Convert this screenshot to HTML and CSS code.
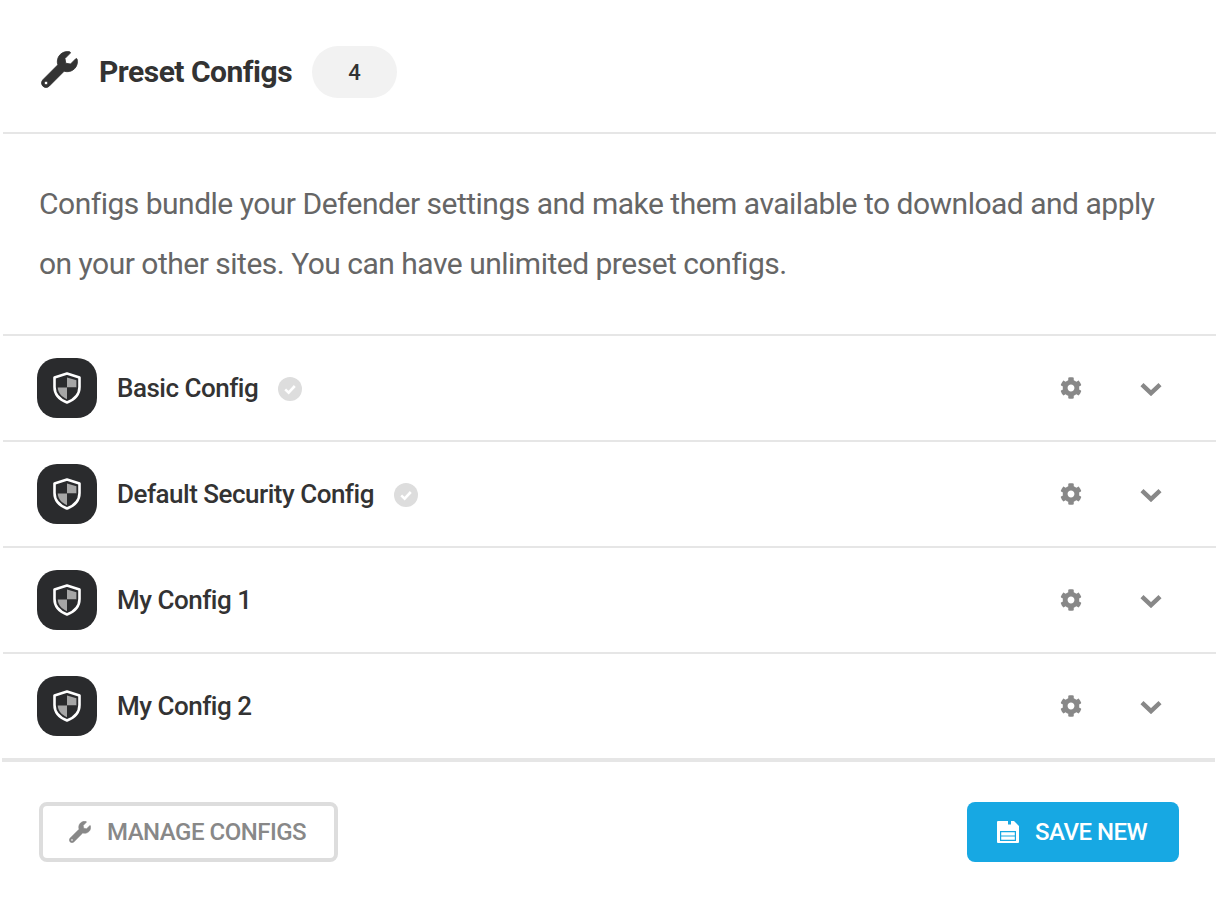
FILE: index.html
```html
<!DOCTYPE html>
<html lang="en">
<head>
<meta charset="utf-8">
<title>Preset Configs</title>
<link rel="stylesheet" href="styles.css">
</head>
<body>
<svg class="defs" width="0" height="0" aria-hidden="true">
  <defs>
    <symbol id="wrench" viewBox="-8 -8 528 528"><path d="M507.73 109.1c-2.24-9.03-13.54-12.09-20.12-5.51l-74.36 74.36-67.88-11.31-11.31-67.88 74.36-74.36c6.62-6.62 3.43-17.9-5.66-20.16-47.38-11.74-99.55.91-136.58 37.93-39.64 39.64-50.55 97.1-34.05 147.2L18.74 402.76c-24.99 24.99-24.99 65.51 0 90.5 24.99 24.99 65.51 24.99 90.5 0l213.21-213.21c50.12 16.71 107.47 5.68 147.37-34.22 37.07-37.07 49.7-89.32 37.91-136.73zM64 472c-13.25 0-24-10.75-24-24 0-13.26 10.75-24 24-24s24 10.74 24 24c0 13.25-10.75 24-24 24z"/></symbol>
    <symbol id="cog" viewBox="0 0 512 512"><path d="M487.4 315.7l-42.6-24.6c4.3-23.2 4.3-47 0-70.2l42.6-24.6c4.9-2.8 7.1-8.6 5.5-14-11.1-35.6-30-67.8-54.7-94.6-3.8-4.1-10-5.1-14.8-2.3L380.8 110c-17.9-15.4-38.5-27.3-60.8-35.1V25.8c0-5.6-3.9-10.5-9.4-11.7-36.7-8.2-74.3-7.8-109.2 0-5.5 1.2-9.4 6.1-9.4 11.7V75c-22.2 7.9-42.8 19.8-60.8 35.1L88.7 85.5c-4.9-2.8-11-1.9-14.8 2.3-24.7 26.7-43.6 58.9-54.7 94.6-1.7 5.4.6 11.2 5.5 14L67.3 221c-4.3 23.2-4.3 47 0 70.2l-42.6 24.6c-4.9 2.8-7.1 8.6-5.5 14 11.1 35.6 30 67.8 54.7 94.6 3.8 4.1 10 5.1 14.8 2.3l42.6-24.6c17.9 15.4 38.5 27.3 60.8 35.1v49.2c0 5.6 3.9 10.5 9.4 11.7 36.7 8.2 74.3 7.8 109.2 0 5.5-1.2 9.4-6.1 9.4-11.7v-49.2c22.2-7.9 42.8-19.8 60.8-35.1l42.6 24.6c4.9 2.8 11 1.9 14.8-2.3 24.7-26.7 43.6-58.9 54.7-94.6 1.5-5.5-.7-11.3-5.6-14.1zM256 336c-44.1 0-80-35.9-80-80s35.9-80 80-80 80 35.9 80 80-35.9 80-80 80z"/></symbol>
    <symbol id="shield" viewBox="0 0 30 32">
      <path d="M15 1.5 L27.5 5.5 V15 C27.5 23.5 21.5 28 15 30.5 C8.5 28 2.5 23.5 2.5 15 V5.5 Z" fill="none" stroke="#fff" stroke-width="2.6" stroke-linejoin="round"/>
      <path d="M15 5.4 L5.6 8.2 V15.6 H15 Z" fill="#2a2b2d"/>
      <path d="M15 5.4 L24.4 8.2 V15.6 H15 Z" fill="#a6a6a6"/>
      <path d="M5.7 15.6 H15 V27.2 C9.6 25 6 21 5.7 15.6 Z" fill="#a6a6a6"/>
      <path d="M24.3 15.6 H15 V27.2 C20.4 25 24 21 24.3 15.6 Z" fill="#2a2b2d"/>
    </symbol>
    <symbol id="check" viewBox="0 0 24 24">
      <circle cx="12" cy="12" r="12" fill="#ddd"/>
      <path d="M7.2 12.4 L10.6 15.6 L16.8 9" fill="none" stroke="#fff" stroke-width="2.6"/>
    </symbol>
    <symbol id="chevron" viewBox="0 0 20 12">
      <path d="M1.8 2 L10 9.8 L18.2 2" fill="none" stroke="currentColor" stroke-width="4"/>
    </symbol>
    <symbol id="save" viewBox="0 0 22 22">
      <path fill-rule="evenodd" d="M1 0 H11 V3.6 H14 V0 H17 L22 5 V21 A1 1 0 0 1 21 22 H1 A1 1 0 0 1 0 21 V1 A1 1 0 0 1 1 0 Z M3 10 V20 H19 V10 Z"/>
      <path d="M4.2 11.2 H17.8 V14.4 H4.2 Z M4.2 15.6 H17.8 V18.8 H4.2 Z"/>
    </symbol>
  </defs>
</svg>

<main class="card">
  <header class="card-header">
    <svg class="title-icon"><use href="#wrench"/></svg>
    <h2 class="title">Preset Configs</h2>
    <span class="pill">4</span>
  </header>

  <p class="intro">Configs bundle your Defender settings and make them available to download and apply on your other sites. You can have unlimited preset configs.</p>

  <ul class="list">
    <li class="row">
      <span class="avatar"><svg class="shield"><use href="#shield"/></svg></span>
      <span class="name">Basic Config</span>
      <svg class="badge"><use href="#check"/></svg>
      <svg class="cog"><use href="#cog"/></svg>
      <svg class="chev"><use href="#chevron"/></svg>
    </li>
    <li class="row">
      <span class="avatar"><svg class="shield"><use href="#shield"/></svg></span>
      <span class="name">Default Security Config</span>
      <svg class="badge"><use href="#check"/></svg>
      <svg class="cog"><use href="#cog"/></svg>
      <svg class="chev"><use href="#chevron"/></svg>
    </li>
    <li class="row">
      <span class="avatar"><svg class="shield"><use href="#shield"/></svg></span>
      <span class="name">My Config 1</span>
      <svg class="cog"><use href="#cog"/></svg>
      <svg class="chev"><use href="#chevron"/></svg>
    </li>
    <li class="row">
      <span class="avatar"><svg class="shield"><use href="#shield"/></svg></span>
      <span class="name">My Config 2</span>
      <svg class="cog"><use href="#cog"/></svg>
      <svg class="chev"><use href="#chevron"/></svg>
    </li>
  </ul>

  <footer class="card-footer">
    <button class="btn btn-ghost" type="button"><svg class="btn-icon-w"><use href="#wrench"/></svg>MANAGE CONFIGS</button>
    <button class="btn btn-blue" type="button"><svg class="btn-icon-s"><use href="#save"/></svg>SAVE NEW</button>
  </footer>
</main>
</body>
</html>
```

FILE: styles.css
```css
* { box-sizing: border-box; }
html, body { margin: 0; padding: 0; background: #fff; }
body { font-family: Roboto, "Liberation Sans", sans-serif; color: #333; }
.defs { position: absolute; }
.card { width: 1214px; margin-left: 2px; }

.card-header {
  display: flex;
  align-items: center;
  height: 134px;
  margin-left: 1px;
  padding: 12px 0 0 37px;
  border-bottom: 2px solid #e6e6e6;
}
.title-icon { width: 37px; height: 37px; fill: #333; stroke: #333; stroke-width: 12; margin: -5px 22px 0 1px; }
.title { margin: 0 0 0 -1px; font-size: 30px; line-height: 40px; font-weight: 700; color: #333; letter-spacing: -0.5px; }
.pill {
  display: flex; align-items: center; justify-content: center;
  width: 85px; height: 52px; margin-left: 20px;
  border-radius: 26px; background: #f2f2f2;
  font-size: 22px; font-weight: 500; color: #333;
}

.intro {
  margin: 0;
  padding: 40px 37px 40px;
  font-size: 30px; line-height: 60px; color: #666;
  letter-spacing: -0.5px;
}

.list { list-style: none; margin: 0 0 0 1px; padding: 0; border-top: 2px solid #e6e6e6; }
.row {
  display: flex; align-items: center;
  height: 106px;
  padding-left: 34px;
  border-bottom: 2px solid #e6e6e6;
}
.row:last-child { border-bottom-width: 4px; height: 108px; margin: 0 1px 0 -1px; padding-left: 35px; }
.row:last-child .chev { margin-right: 53px; }
.avatar {
  display: flex; align-items: center; justify-content: center;
  width: 60px; height: 60px; border-radius: 20px;
  background: #2a2b2d;
}
.shield { width: 30px; height: 32px; }
.name { margin-left: 20px; font-size: 26px; font-weight: 500; color: #333; letter-spacing: -0.5px; }
.badge { width: 24px; height: 24px; margin: 2px 0 0 20px; }
.cog { width: 22px; height: 22px; fill: #888; margin-left: auto; }
.chev { width: 22px; height: 14px; color: #888; margin: 2px 54px 0 58px; }

.card-footer {
  display: flex; justify-content: space-between; align-items: center;
  padding: 40px 37px 0 37px;
}
.btn {
  display: flex; align-items: center;
  height: 60px; border-radius: 8px;
  font-family: inherit; font-size: 24px; font-weight: 500;
  letter-spacing: -0.5px;
}
.btn-ghost {
  width: 299px; padding: 0 0 0 26px;
  background: #fff; border: 4px solid #ddd; color: #888;
}
.btn-blue {
  width: 212px; padding: 0 0 0 30px;
  background: #17a8e3; border: 0; color: #fff;
}
.btn-icon-w { width: 22px; height: 22px; fill: #888; stroke: #888; stroke-width: 12; margin-right: 16px; }
.btn-icon-s { width: 22px; height: 22px; fill: #fff; margin-right: 16px; }
```
